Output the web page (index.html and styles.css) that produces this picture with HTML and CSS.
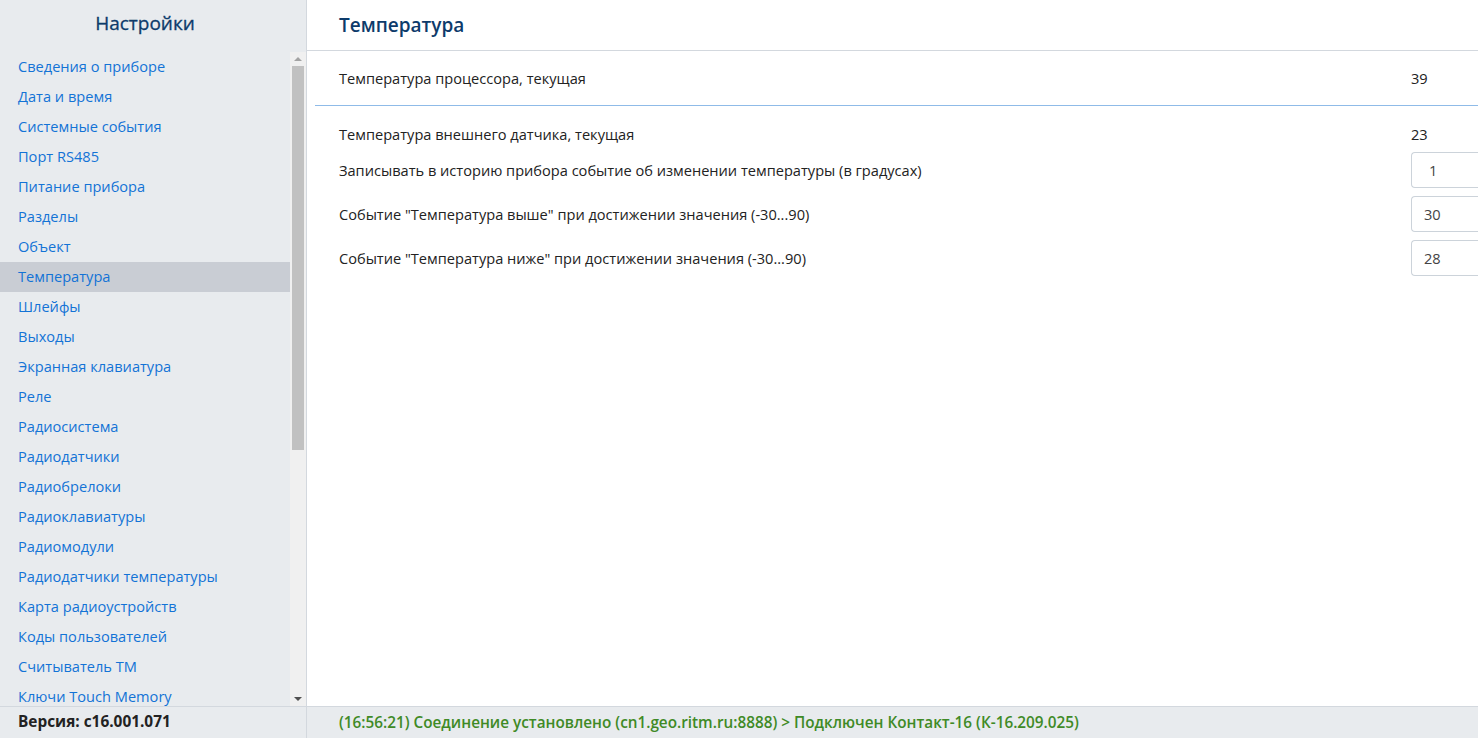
FILE: index.html
```html
<!DOCTYPE html>
<html lang="ru">
<head>
<meta charset="utf-8">
<title>Настройки</title>
<link rel="stylesheet" href="styles.css">
</head>
<body>
<div class="app">
  <aside class="sidebar">
    <div class="side-title">Настройки</div>
    <div class="side-body">
      <ul class="menu">
        <li>Сведения о приборе</li>
        <li>Дата и время</li>
        <li>Системные события</li>
        <li>Порт RS485</li>
        <li>Питание прибора</li>
        <li>Разделы</li>
        <li>Объект</li>
        <li class="active">Температура</li>
        <li>Шлейфы</li>
        <li>Выходы</li>
        <li>Экранная клавиатура</li>
        <li>Реле</li>
        <li>Радиосистема</li>
        <li>Радиодатчики</li>
        <li>Радиобрелоки</li>
        <li>Радиоклавиатуры</li>
        <li>Радиомодули</li>
        <li>Радиодатчики температуры</li>
        <li>Карта радиоустройств</li>
        <li>Коды пользователей</li>
        <li>Считыватель ТМ</li>
        <li>Ключи Touch Memory</li>
      </ul>
      <div class="scrollbar">
        <div class="arrow up"></div>
        <div class="track"><div class="thumb"></div></div>
        <div class="arrow down"></div>
      </div>
    </div>
    <div class="version">Версия: c16.001.071</div>
  </aside>
  <main class="main">
    <h1 class="page-title">Температура</h1>
    <div class="content">
      <div class="row first">
        <span class="label">Температура процессора, текущая</span>
        <span class="value">39</span>
      </div>
      <div class="group">
        <div class="row">
          <span class="label">Температура внешнего датчика, текущая</span>
          <span class="value">23</span>
        </div>
        <div class="row input-row">
          <span class="label">Записывать в историю прибора событие об изменении температуры (в градусах)</span>
          <input class="field center" type="text" value="1">
        </div>
        <div class="row input-row">
          <span class="label">Событие "Температура выше" при достижении значения (-30...90)</span>
          <input class="field" type="text" value="30">
        </div>
        <div class="row input-row">
          <span class="label">Событие "Температура ниже" при достижении значения (-30...90)</span>
          <input class="field" type="text" value="28">
        </div>
      </div>
    </div>
    <div class="status">(16:56:21) Соединение установлено (cn1.geo.ritm.ru:8888) &gt; Подключен Контакт-16 (К-16.209.025)</div>
  </main>
</div>
</body>
</html>
```
FILE: styles.css
```css
* { box-sizing: border-box; }
html, body { margin: 0; padding: 0; height: 100%; overflow: hidden; }
body {
  font-family: "Open Sans", "Noto Sans", sans-serif;
  font-size: 14.6px;
  color: #222;
  background: #fff;
}
.app {
  display: flex;
  height: 738px;
  width: 1478px;
}
.sidebar {
  width: 307px;
  flex: none;
  background: #e8ebee;
  border-right: 1px solid #d3d8de;
  display: flex;
  flex-direction: column;
}
.side-title {
  height: 52px;
  padding: 10px 16px 0 0;
  text-align: center;
  font-size: 19px;
  color: #0d3b6b;
  font-weight: 500;
  -webkit-text-stroke: 0.3px #0d3b6b;
}
.side-body {
  flex: 1;
  display: flex;
  min-height: 0;
}
.menu {
  list-style: none;
  margin: 0;
  padding: 0;
  flex: 1;
  overflow: hidden;
}
.menu li {
  height: 30px;
  line-height: 28px;
  padding-left: 18px;
  color: #1373d6;
  font-size: 14.6px;
  white-space: nowrap;
}
.menu li.active {
  background: #c9cdd4;
}
.scrollbar {
  width: 16px;
  flex: none;
  background: #f0f0f0;
  display: flex;
  flex-direction: column;
}
.arrow {
  height: 14px;
  flex: none;
  display: flex;
  align-items: center;
  justify-content: center;
}
.arrow::before {
  content: "";
  width: 0;
  height: 0;
  border-left: 4px solid transparent;
  border-right: 4px solid transparent;
}
.arrow.up::before { border-bottom: 4px solid #a3a3a3; }
.arrow.down::before { border-top: 4px solid #505050; }
.track { flex: 1; padding: 0 2px; }
.thumb {
  height: 384px;
  background: #c1c1c1;
}
.version {
  height: 32px;
  flex: none;
  border-top: 1px solid #d3d8de;
  padding-left: 18px;
  line-height: 30px;
  font-weight: 700;
  font-size: 15.4px;
  color: #222;
}
.main {
  flex: 1;
  display: flex;
  flex-direction: column;
  min-width: 0;
}
.page-title {
  margin: 0;
  height: 51px;
  flex: none;
  padding: 12px 0 0 32px;
  font-size: 19px;
  font-weight: 600;
  color: #0d3b6b;
  border-bottom: 1px solid #d3d8de;
}
.content {
  flex: 1;
  padding-left: 8px;
}
.row {
  display: flex;
  align-items: center;
  padding-left: 24px;
  font-size: 14.6px;
  color: #222;
}
.row.first {
  height: 55px;
  border-bottom: 1px solid #8fbbe8;
}
.group { padding-top: 13px; }
.group .row { height: 29px; }
.group .row.input-row { height: 44px; }
.label { flex: 1; }
.value {
  width: 67px;
  flex: none;
  color: #222;
}
.field {
  width: 73px;
  height: 36px;
  flex: none;
  margin-right: -6px;
  border: 1px solid #ccd3da;
  border-radius: 4px 0 0 4px;
  border-right: none;
  padding: 0 0 0 12px;
  font-family: "Open Sans", "Noto Sans", sans-serif;
  font-size: 14.6px;
  color: #444;
  background: #fff;
}
.field.center { padding-left: 17px; }
.status {
  height: 32px;
  flex: none;
  background: #e8ebee;
  border-top: 1px solid #d3d8de;
  padding-left: 32px;
  line-height: 30px;
  color: #3f8a26;
  font-weight: 600;
  font-size: 15.3px;
}
```
